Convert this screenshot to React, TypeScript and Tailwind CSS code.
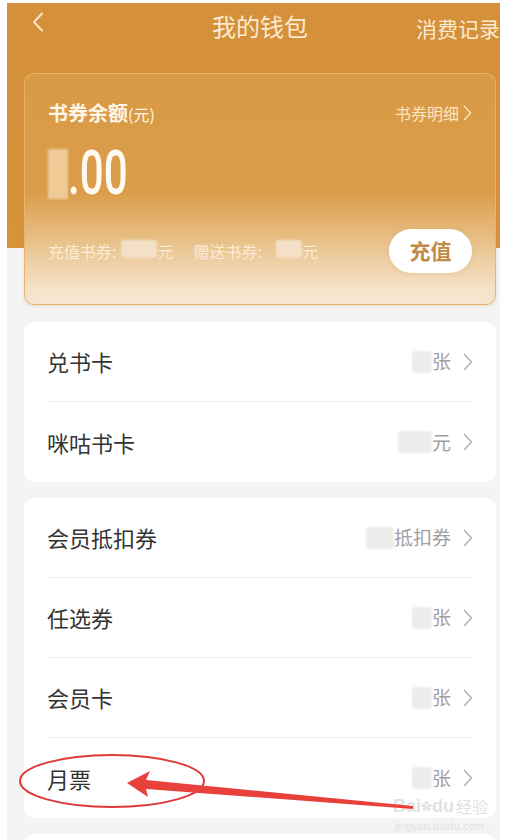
import React from "react";

function Chevron({ color = "#b5b5b5", w = 10, h = 18, sw = 1.6 }: { color?: string; w?: number; h?: number; sw?: number }) {
  return (
    <svg width={w} height={h} viewBox="0 0 10 18" fill="none">
      <path d="M1.5 1.5 L8.5 9 L1.5 16.5" stroke={color} strokeWidth={sw} strokeLinecap="round" strokeLinejoin="round" />
    </svg>
  );
}

function Blur({ w, h, c = "#ececec" }: { w: number; h: number; c?: string }) {
  return <span className="inline-block rounded-[3px] blur-[1px]" style={{ width: w, height: h, background: c }} />;
}

function Row({ label, value, blurW, last }: { label: string; value: string; blurW: number; last?: boolean }) {
  return (
    <div className={"flex h-[80px] items-center justify-between " + (last ? "" : "border-b border-[#eeeeee]")}>
      <span className="text-[22px] text-[#333333]">{label}</span>
      <div className="flex items-center">
        <Blur w={blurW} h={22} />
        <span className="text-[19px] text-[#a0a0a0]">{value}</span>
        <span className="ml-[12px] flex items-center">
          <Chevron />
        </span>
      </div>
    </div>
  );
}

export default function App() {
  return (
    <div className="relative h-[840px] w-[513px] overflow-hidden bg-white pl-[7px] pt-[3px] font-['Noto_Sans_CJK_SC','Noto_Sans',sans-serif]">
      <div className="relative h-[837px] w-[493px] overflow-hidden bg-[linear-gradient(to_bottom,#d4903a_0px,#d69339_245px,#f4f4f4_245px)]">
        {/* nav */}
        <div className="flex h-[70px] items-start">
          <div className="w-[160px] pl-[25px] pt-[9px]">
            <svg width="12" height="20" viewBox="0 0 12 20" fill="none">
              <path d="M10 1.5 L2 10 L10 18.5" stroke="#fbe6c6" strokeWidth="2" strokeLinecap="round" strokeLinejoin="round" />
            </svg>
          </div>
          <div className="w-[186px] pt-[7px] text-center text-[24px] leading-[32px] text-[#fcebd1]">我的钱包</div>
          <div className="ml-[63px] whitespace-nowrap pt-[10px] text-[21px] leading-[30px] text-[#fcebd1]">消费记录</div>
        </div>

        {/* balance card */}
        <div className="ml-[17px] h-[232px] w-[472px] rounded-[10px] border border-[#e8b46e] bg-[linear-gradient(to_bottom,#d99a45_0%,#db9d4a_52%,#e9c38d_74%,#f4e0c5_92%,#f6e7d3_100%)] px-[23px] shadow-[0_1px_3px_rgba(190,140,70,0.25)]">
          <div className="mt-[25px] flex h-[28px] items-center justify-between">
            <div className="flex items-baseline text-[#fff6e8]">
              <span className="text-[20px] font-bold leading-[28px]">书券余额</span>
              <span className="text-[16px]">(元)</span>
            </div>
            <div className="flex items-center text-[16px] text-[#fbe4c3]">
              <span>书券明细</span>
              <span className="ml-[4px] flex items-center">
                <Chevron color="#fbe4c3" w={9} h={16} sw={1.6} />
              </span>
            </div>
          </div>
          <div className="mt-[16px] flex h-[60px] items-center">
            <span className="mt-[2px] inline-block h-[50px] w-[20px] bg-[#f3d6ab] opacity-80 blur-[1px]" />
            <span className="inline-block origin-left scale-x-[0.68] font-['Roboto',sans-serif] text-[62px] font-medium leading-[60px] text-[#fffaf2]">.00</span>
          </div>
          <div className="mt-[26px] flex h-[44px] items-center justify-between">
            <div className="flex items-center text-[16px] text-[#fbebd4]">
              <span>充值书券:</span>
              <span className="ml-[5px]"><Blur w={36} h={18} c="#f3e0c6" /></span>
              <span>元</span>
              <span className="ml-[20px]">赠送书券:</span>
              <span className="ml-[14px]"><Blur w={26} h={18} c="#f3e0c6" /></span>
              <span>元</span>
            </div>
            <div className="flex h-[44px] w-[83px] items-center justify-center rounded-full bg-white text-[21px] font-bold text-[#c18b46] shadow-[0_1px_4px_rgba(200,150,80,0.25)]">
              充值
            </div>
          </div>
        </div>

        {/* list 1 */}
        <div className="ml-[17px] mt-[17px] w-[472px] rounded-[10px] bg-white px-[23px]">
          <Row label="兑书卡" value="张" blurW={20} />
          <Row label="咪咕书卡" value="元" blurW={34} last />
        </div>

        {/* list 2 */}
        <div className="ml-[17px] mt-[16px] w-[472px] rounded-[10px] bg-white px-[23px]">
          <Row label="会员抵扣券" value="抵扣券" blurW={28} />
          <Row label="任选券" value="张" blurW={20} />
          <Row label="会员卡" value="张" blurW={20} />
          <Row label="月票" value="张" blurW={20} last />
        </div>

        <div className="ml-[17px] mt-[16px] h-[60px] w-[472px] rounded-[10px] bg-white" />
      </div>

      {/* watermark */}
      <div className="pointer-events-none absolute left-[393px] top-[795px] flex items-center whitespace-nowrap text-[#e2e2e2]">
        <span className="font-['Liberation_Sans',sans-serif] text-[18px] font-bold leading-[22px]">Bai</span>
        <span className="text-[11px] leading-[22px]">✿</span>
        <span className="font-['Liberation_Sans',sans-serif] text-[18px] font-bold leading-[22px]">du</span>
        <span className="ml-[2px] text-[16px] leading-[22px]">经验</span>
      </div>
      <div className="pointer-events-none absolute left-[395px] top-[819px] whitespace-nowrap font-['Liberation_Sans',sans-serif] text-[11px] leading-[14px] text-[#e2e2e2]">jingyan.baidu.com</div>

      {/* annotation */}
      <svg className="pointer-events-none absolute left-0 top-0" width="513" height="840" viewBox="0 0 513 840">
        <ellipse cx="112" cy="781" rx="92" ry="26" fill="none" stroke="#dc3a3a" strokeWidth="2" />
        <path d="M127 783 L150 771 L146 780 L413 806 L413 809 L146 789 L148 797 Z" fill="#e8413c" />
      </svg>
    </div>
  );
}
